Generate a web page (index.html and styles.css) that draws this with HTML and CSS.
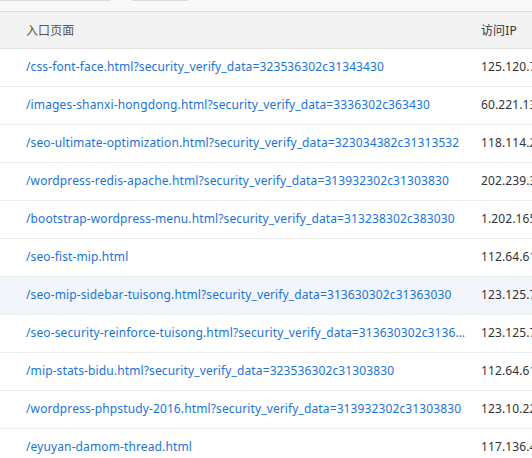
FILE: index.html
```html
<!DOCTYPE html>
<html>
<head>
<meta charset="utf-8">
<link rel="stylesheet" href="styles.css">
</head>
<body>
<div class="topbar">
  <span class="tab tab-a"></span>
  <span class="tab tab-b"></span>
</div>
<table class="grid">
  <colgroup><col class="c-url"><col class="c-ip"></colgroup>
  <thead>
    <tr><th class="url">入口页面</th><th class="ip">访问IP</th></tr>
  </thead>
  <tbody>
    <tr><td class="url"><a>/css-font-face.html?security_verify_data=323536302c31343430</a></td><td class="ip">125.120.74.58</td></tr>
    <tr><td class="url"><a>/images-shanxi-hongdong.html?security_verify_data=3336302c363430</a></td><td class="ip">60.221.133.42</td></tr>
    <tr><td class="url"><a>/seo-ultimate-optimization.html?security_verify_data=323034382c31313532</a></td><td class="ip">118.114.213.8</td></tr>
    <tr><td class="url"><a>/wordpress-redis-apache.html?security_verify_data=313932302c31303830</a></td><td class="ip">202.239.38.1</td></tr>
    <tr><td class="url"><a>/bootstrap-wordpress-menu.html?security_verify_data=313238302c383030</a></td><td class="ip">1.202.165.3</td></tr>
    <tr><td class="url"><a>/seo-fist-mip.html</a></td><td class="ip">112.64.61.9</td></tr>
    <tr class="hover"><td class="url"><a>/seo-mip-sidebar-tuisong.html?security_verify_data=313630302c31363030</a></td><td class="ip">123.125.71.2</td></tr>
    <tr><td class="url"><a>/seo-security-reinforce-tuisong.html?security_verify_data=313630302c31363030</a></td><td class="ip">123.125.71.9</td></tr>
    <tr><td class="url"><a>/mip-stats-bidu.html?security_verify_data=323536302c31303830</a></td><td class="ip">112.64.61.9</td></tr>
    <tr><td class="url"><a>/wordpress-phpstudy-2016.html?security_verify_data=313932302c31303830</a></td><td class="ip">123.10.227.1</td></tr>
    <tr><td class="url"><a>/eyuyan-damom-thread.html</a></td><td class="ip">117.136.4.2</td></tr>
  </tbody>
</table>
</body>
</html>
```
FILE: styles.css
```css
html, body {
  margin: 0;
  padding: 0;
  background: #fff;
  overflow: hidden;
}
body {
  width: 532px;
  height: 458px;
  font-family: "Noto Sans", "Noto Sans CJK SC", sans-serif;
  font-size: 12px;
  letter-spacing: 0.12px;
}
.topbar {
  height: 11px;
  background: #f8f8f8;
  display: flex;
  align-items: flex-start;
}
.tab {
  display: block;
  height: 0;
  border-top: 1px solid #dcdcdc;
}
.tab-a { width: 110px; }
.tab-b { width: 56px; margin-left: 22px; }
.grid {
  border-collapse: collapse;
  table-layout: fixed;
  width: 626px;
}
.c-url { width: 466px; }
.c-ip { width: 160px; }
.grid th {
  height: 35px;
  padding: 0 0 1px 0;
  background: #f2f2f2;
  border-top: 1px solid #dcdcdc;
  border-bottom: 1px solid #e2e2e2;
  font-weight: normal;
  color: #555;
  text-align: left;
  vertical-align: middle;
}
.grid td {
  height: 35px;
  border-bottom: 1px solid #ececec;
  padding: 0 0 2px 0;
  vertical-align: middle;
  white-space: nowrap;
  overflow: hidden;
  text-overflow: ellipsis;
}
.grid .url { padding-left: 26px; padding-right: 1px; }
.grid .ip { padding-left: 15px; color: #333; }
.grid td.url { color: #1a73d9; }
.grid a { color: #1a73d9; text-decoration: none; }
.grid tr.hover td { background: #f2f6fc; }
```
